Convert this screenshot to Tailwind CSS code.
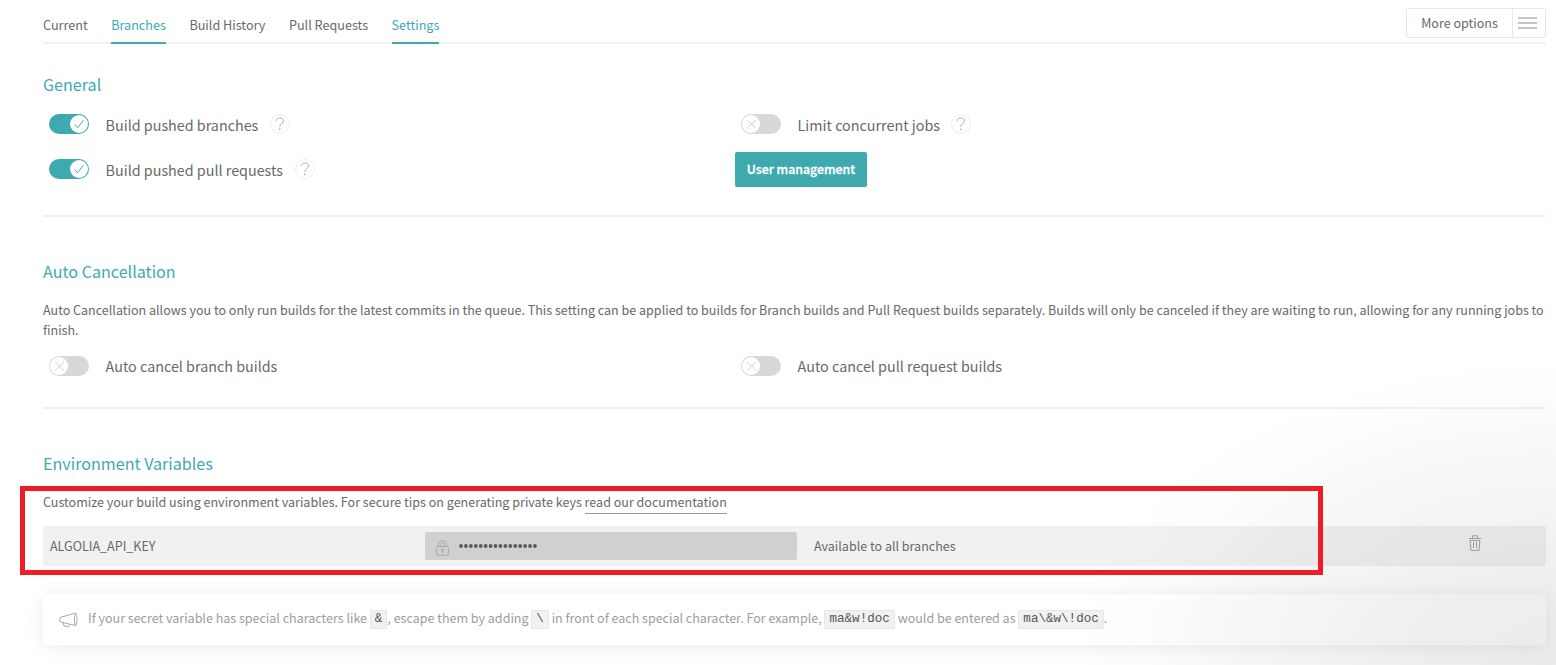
<!DOCTYPE html>
<html lang="en">
<head>
<meta charset="utf-8">
<title>Settings</title>
<script src="https://cdn.jsdelivr.net/npm/@tailwindcss/browser@4"></script>
</head>
<body class="relative h-[665px] w-[1556px] overflow-hidden bg-white font-['Noto_Sans_CJK_SC',sans-serif] text-[12.540px] text-[#696969]">
<svg class="hidden">
  <symbol id="help" viewBox="0 0 20 20"><circle cx="10" cy="10" r="9.4" fill="#fff" stroke="#ededed" stroke-width="1"/><path d="M6 7.200C6.100 5 7.700 3.900 9.800 3.900c2.100 0 3.700 1.200 3.700 3.100 0 2.600-3.700 2.700-3.700 5.500v.7" fill="none" stroke="#b0b0b0" stroke-width="1"/><circle cx="9.800" cy="15.300" r=".9" fill="#b0b0b0"/></symbol>
  <symbol id="on" viewBox="0 0 40 20"><rect width="40" height="20" rx="10" fill="#3eaaaf"/><circle cx="30" cy="10" r="9" fill="#fff"/><path d="M25.500 10.600l3 3.200 6-7.600" fill="none" stroke="#3eaaaf" stroke-width="1"/></symbol>
  <symbol id="off" viewBox="0 0 40 20"><rect width="40" height="20" rx="10" fill="#d8d8d8"/><circle cx="10" cy="10" r="9" fill="#fff"/><path d="M6 6l9 8.500M15 6l-9 8.500" fill="none" stroke="#d0d0d0" stroke-width="1"/></symbol>
</svg>

<main class="ml-[43px] w-[1503px]">
  <header class="flex h-11 items-stretch justify-between border-b-2 border-[#f1f1f1]">
    <nav class="-mb-0.5 flex gap-[23.500px] text-[12.640px] leading-[20px]">
      <a class="pt-[15px]">Current</a>
      <a class="border-b-2 border-[#3eaaaf] pt-[15px] text-[#3eaaaf]">Branches</a>
      <a class="pt-[15px]">Build History</a>
      <a class="pt-[15px]">Pull Requests</a>
      <a class="border-b-2 border-[#3eaaaf] pt-[15px] text-[#3eaaaf]">Settings</a>
    </nav>
    <div class="mt-2 flex h-[30px] w-[140px] rounded-xs border border-[#e8e8e8]">
      <span class="w-[106px] border-r border-[#e8e8e8] text-center leading-[28px]">More options</span>
      <svg class="ml-[5px] mt-2 h-3 w-[19px]" viewBox="0 0 19 12"><path d="M0 1h19M0 6h19M0 11h19" stroke="#b5b5b5" stroke-width="1.600"/></svg>
    </div>
  </header>

  <section class="h-[173px] border-b-2 border-[#f1f1f1] pt-[28px]">
    <h2 class="h-6 text-[16.120px] leading-6 text-[#3eaaaf]">General</h2>
    <div class="mt-[11px] grid grid-cols-[692px_1fr] text-[14.330px]">
      <div class="flex h-[45px] pl-1.5 pt-[7px]"><svg class="h-5 w-10"><use href="#on"/></svg><span class="ml-[16.600px] mt-px leading-5">Build pushed branches</span><svg class="ml-[11.400px] h-5 w-5"><use href="#help"/></svg></div>
      <div class="flex h-[45px] pl-1.5 pt-[7px]"><svg class="h-5 w-10"><use href="#off"/></svg><span class="ml-[16.600px] mt-px leading-5">Limit concurrent jobs</span><svg class="ml-[11.400px] h-5 w-5"><use href="#help"/></svg></div>
      <div class="flex h-[45px] pl-1.5 pt-[7px]"><svg class="h-5 w-10"><use href="#on"/></svg><span class="ml-[16.600px] mt-px leading-5">Build pushed pull requests</span><svg class="ml-[11.900px] h-5 w-5"><use href="#help"/></svg></div>
      <div class="flex"><button class="h-[35px] w-[132px] rounded-xs bg-[#3eaaaf] pb-px text-[12.350px] font-medium text-white [-webkit-text-stroke:0.3px_white]">User management</button></div>
    </div>
  </section>

  <section class="h-[192px] border-b-2 border-[#f1f1f1] pt-[42px]">
    <h2 class="h-6 text-[16.120px] leading-6 text-[#3eaaaf]">Auto Cancellation</h2>
    <p class="mt-[17px] whitespace-nowrap leading-5">Auto Cancellation allows you to only run builds for the latest commits in the queue. This setting can be applied to builds for Branch builds and Pull Request builds separately. Builds will only be canceled if they are waiting to run, allowing for any running jobs to<br>finish.</p>
    <div class="mt-4 grid grid-cols-[692px_1fr] text-[14.330px]">
      <div class="flex pl-1.5"><svg class="h-5 w-10"><use href="#off"/></svg><span class="ml-[16.600px] leading-5">Auto cancel branch builds</span></div>
      <div class="flex pl-1.5"><svg class="h-5 w-10"><use href="#off"/></svg><span class="ml-[16.600px] leading-5">Auto cancel pull request builds</span></div>
    </div>
  </section>

  <section class="pt-[42px]">
    <h2 class="h-6 text-[16.120px] leading-6 text-[#3eaaaf]">Environment Variables</h2>
    <p class="mt-[17px] h-6 leading-5">Customize your build using environment variables. For secure tips on generating private keys <a class="inline-block h-[22px] border-b border-[#999]">read our documentation</a></p>
    <div class="mt-[10px] flex h-10 items-center rounded-xs bg-[#f1f1f1]">
      <span class="w-[382px] pl-[7px]">ALGOLIA_API_KEY</span>
      <div class="flex h-7 w-[372px] items-center rounded-xs bg-[#d0d0d0] pl-[11px]">
        <svg class="mt-1 h-4 w-[13px]" viewBox="0 0 13 16" fill="none" stroke="#aaa"><rect x=".6" y="6.500" width="11.800" height="8.900" rx="1"/><path d="M2.500 6.500V4.500a4 4 0 018 0v2M4.700 6.500V4.500a1.800 1.800 0 013.600 0v2M6.500 10.500v3"/><circle cx="6.500" cy="9.800" r="1.200"/></svg>
        <svg class="ml-[10px] h-1 w-[79px]" viewBox="0 0 79 4"><path d="M2 2h75" stroke="#5a5a5a" stroke-width="3.800" stroke-linecap="round" stroke-dasharray="0 4.930"/></svg>
      </div>
      <span class="ml-[17px] w-[655px]">Available to all branches</span>
      <svg class="mb-1.5 h-4 w-3" viewBox="0 0 12 16" fill="none" stroke="#a3a3a3"><path d="M0 3.500h12M3.500 3V.8h5V3M1.200 5.500l.7 9.900h8.200l.7-9.900zM4.500 7v6M7.500 7v6"/></svg>
    </div>
    <div class="mt-7 flex h-[51px] items-center bg-white pl-4 text-[#9d9d9d] shadow-[0_2px_20px_0_rgba(0,0,0,0.08)]">
      <svg class="h-4 w-[19px]" viewBox="0 0 19 16" fill="none" stroke="#aaa"><path d="M16.500 1L1.200 5.500.6 8.500l1 1.500 15 3.500M16.500 1c-1.500 3-1.500 9 0 12.500M16.500 1c2 2 2 10 0 12.500M4 10.500l1 3.300 4.500 1 1.500-2.500"/></svg>
      <p class="mb-1 ml-[10px] h-5 whitespace-nowrap leading-5 tracking-[-0.01px]">If your secret variable has special characters like <code class="rounded-[1px] border border-[#e8e8e8] bg-[#f1f1f1] px-1 pb-0.5 pt-px align-[1px] font-['Liberation_Mono',monospace] text-[12.600px] leading-0 text-[#555]">&amp;</code>, escape them by adding <code class="rounded-[1px] border border-[#e8e8e8] bg-[#f1f1f1] px-1 pb-0.5 pt-px align-[1px] font-['Liberation_Mono',monospace] text-[12.600px] leading-0 text-[#555]">\</code> in front of each special character. For example, <code class="rounded-[1px] border border-[#e8e8e8] bg-[#f1f1f1] px-1 pb-0.5 pt-px align-[1px] font-['Liberation_Mono',monospace] text-[12.600px] leading-0 text-[#555]">ma&amp;w!doc</code> would be entered as <code class="rounded-[1px] border border-[#e8e8e8] bg-[#f1f1f1] px-1 pb-0.5 pt-px align-[1px] font-['Liberation_Mono',monospace] text-[12.600px] leading-0 text-[#555]">ma\&amp;w\!doc</code>.</p>
    </div>
  </section>
</main>

<div class="pointer-events-none absolute bottom-0 right-0 h-[310px] w-[490px] bg-[radial-gradient(100%_100%_at_bottom_right,rgba(70,75,90,0.11)_0%,rgba(70,75,90,0.09)_30%,rgba(70,75,90,0.05)_60%,rgba(70,75,90,0.018)_80%,transparent_100%)]"></div>
<div class="pointer-events-none absolute left-5 top-[486px] h-[89px] w-[1303px] border-5 border-[#ee1c24]"></div>
</body>
</html>
